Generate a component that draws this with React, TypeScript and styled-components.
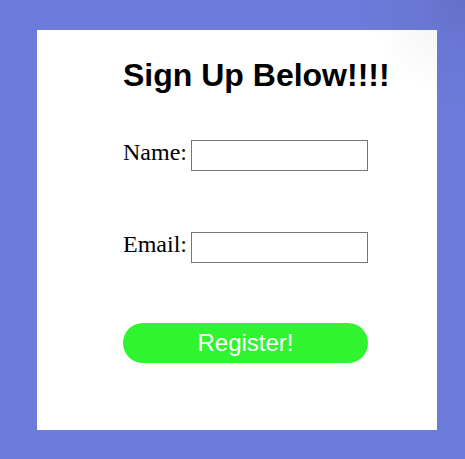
import React from "react";
import styled, { createGlobalStyle } from "styled-components";

const Global = createGlobalStyle`
  html, body {
    margin: 0;
    padding: 0;
    background-color: #6c7bd9;
    background-image: radial-gradient(circle at 100% 0%, #6470c8 0px, #6a78d4 50px, rgba(108,123,217,0) 110px);
    width: 465px;
    height: 459px;
    overflow: hidden;
  }
`;

const Page = styled.div`
  padding: 30px 0 0 37px;
`;

const Card = styled.div`
  box-sizing: border-box;
  width: 400px;
  height: 400px;
  padding: 27px 0 0 86px;
  background-color: #ffffff;
  background-image: radial-gradient(circle at 100% 0%, #f5f5f5 0px, rgba(255,255,255,0) 60px);
  display: flex;
  flex-direction: column;
  align-items: flex-start;
`;

const Title = styled.h1`
  margin: 0 0 46px 0;
  font-family: "Liberation Sans", Arial, sans-serif;
  font-size: 32px;
  font-weight: bold;
  line-height: normal;
  color: #000;
`;

const Row = styled.div<{ $gap: number }>`
  display: flex;
  align-items: flex-start;
  gap: 4px;
  height: 31px;
  margin-bottom: ${(p) => p.$gap}px;
`;

const Label = styled.label`
  font-family: "Liberation Serif", "Times New Roman", serif;
  font-size: 24px;
  line-height: 24px;
  color: #000;
  width: 64px;
  white-space: nowrap;
`;

const Input = styled.input`
  box-sizing: border-box;
  width: 177px;
  height: 31px;
  margin: 0;
  padding: 1px 2px;
  border: 1px solid #767676;
  border-radius: 0;
  background: #fff;
  font-family: "Liberation Sans", Arial, sans-serif;
  font-size: 13px;
`;

const Button = styled.button`
  box-sizing: border-box;
  width: 245px;
  height: 40px;
  margin: 0;
  padding: 0;
  border: none;
  border-radius: 20px;
  background: #2ff42f;
  color: #ffffff;
  font-family: "Liberation Sans", Arial, sans-serif;
  font-size: 24px;
  line-height: 40px;
  text-align: center;
  cursor: pointer;
`;

export default function App() {
  return (
    <>
      <Global />
      <Page>
        <Card>
          <Title>Sign Up Below!!!!</Title>
          <Row $gap={61}>
            <Label htmlFor="name">Name:</Label>
            <Input id="name" type="text" />
          </Row>
          <Row $gap={60}>
            <Label htmlFor="email">Email:</Label>
            <Input id="email" type="email" />
          </Row>
          <Button type="button">Register!</Button>
        </Card>
      </Page>
    </>
  );
}
